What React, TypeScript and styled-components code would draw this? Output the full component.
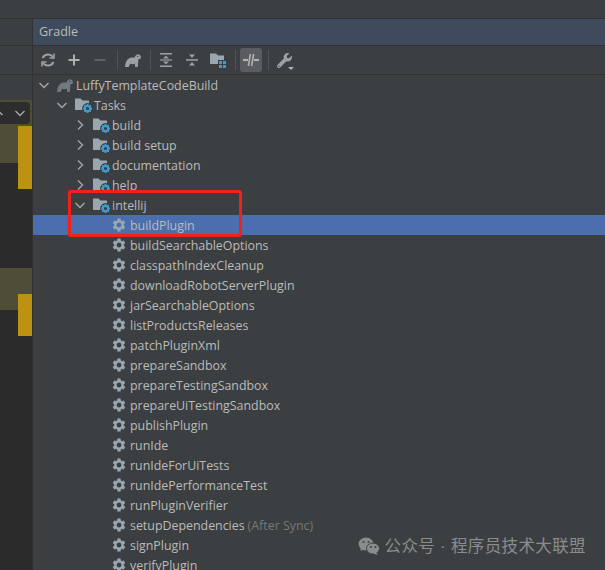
import React from 'react';
import styled, { createGlobalStyle } from 'styled-components';
import { MdSettings } from 'react-icons/md';
import { FaWrench } from 'react-icons/fa';

const GlobalStyle = createGlobalStyle`
  html, body { margin: 0; padding: 0; background: #3c3f41; }
  body { width: 605px; height: 570px; overflow: hidden; }
`;

const Page = styled.div`
  width: 605px;
  height: 570px;
  display: flex;
  flex-direction: column;
  overflow: hidden;
  position: relative;
  background: #3c3f41;
  font-family: "Open Sans", "Noto Sans", sans-serif;
`;

const TopStrip = styled.div`
  height: 18px;
  flex: none;
  background: #3c3f41;
  border-bottom: 1px solid #323232;
`;

const Body = styled.div`
  flex: 1;
  display: flex;
  min-height: 0;
`;

const LeftColumn = styled.div`
  width: 32px;
  flex: none;
  display: flex;
  flex-direction: column;
  background: #2b2b2b;
  border-right: 1px solid #323232;
`;

const LeftBar = styled.div<{ $h: number; $plain?: boolean }>`
  height: ${p => p.$h}px;
  flex: none;
  background: #3c3f41;
  border-bottom: ${p => (p.$plain ? 'none' : '1px solid #323232')};
  box-sizing: border-box;
`;

const Editor = styled.div`
  display: grid;
  grid-template-columns: 18px 14px;
  grid-template-rows: 26px 37px 26px 79px 26px 16px 26px;
  grid-template-areas:
    "olive1 olive1"
    "olive2 yellow1"
    "dark1 yellow1"
    "dark2 dark2"
    "olive3 olive3"
    "olive4 yellow2"
    "dark3 yellow2";
`;

const Cell = styled.div<{ $area: string; $color: string }>`
  grid-area: ${p => p.$area};
  background: ${p => p.$color};
  min-width: 0;
`;

const FindPopup = styled.div`
  margin: 2px 2px 2px 0;
  height: 22px;
  background: #2d2d2d;
  border-radius: 0 4px 4px 0;
  display: flex;
  align-items: center;
  justify-content: flex-end;
  gap: 12px;
  padding-right: 5px;
  overflow: hidden;

  svg {
    flex: none;
  }
`;

const GradlePanel = styled.div`
  flex: 1;
  min-width: 0;
  display: flex;
  flex-direction: column;
`;

const Header = styled.div`
  height: 26px;
  flex: none;
  background: #3d4b5c;
  color: #bbbbbb;
  font-size: 12.5px;
  line-height: 26px;
  padding-left: 6px;
  border-bottom: 1px solid #323232;
`;

const Toolbar = styled.div`
  height: 28px;
  flex: none;
  display: flex;
  align-items: center;
  padding-left: 4px;
  border-bottom: 1px solid #323232;
`;

const ToolButton = styled.div<{ $active?: boolean }>`
  width: 22px;
  height: 24px;
  margin-right: 4px;
  flex: none;
  display: flex;
  align-items: center;
  justify-content: center;
  border-radius: 3px;
  background: ${p => (p.$active ? '#5a5d5f' : 'transparent')};
`;

const ToolSep = styled.div`
  width: 1px;
  height: 20px;
  background: #515456;
  margin: 0 4px 0 2px;
  flex: none;
`;

const Tree = styled.div`
  flex: 1;
  overflow: hidden;
`;

const Row = styled.div<{ $depth: number; $selected?: boolean }>`
  height: 20px;
  display: flex;
  align-items: center;
  padding-left: ${p => 6 + p.$depth * 18}px;
  background: ${p => (p.$selected ? '#4b6eaf' : 'transparent')};
  color: #bbbbbb;
  font-size: 12.4px;
  white-space: nowrap;
`;

const ArrowSlot = styled.span`
  width: 18px;
  height: 20px;
  flex: none;
  display: flex;
  align-items: center;
`;

const IconSlot = styled.span`
  width: 18px;
  height: 16px;
  margin-right: 1px;
  flex: none;
  display: flex;
  align-items: center;
`;

const Hint = styled.span`
  color: #787878;
  margin-left: 3px;
`;

const RedBox = styled.div`
  position: absolute;
  left: 68px;
  top: 190px;
  width: 168px;
  height: 41px;
  border: 3px solid #f5201a;
  border-radius: 3px;
`;

const Watermark = styled.div`
  position: absolute;
  right: 19px;
  top: 536px;
  display: flex;
  align-items: center;
  gap: 5px;
  color: #8a8c8d;
  font-family: "Liberation Sans", "Noto Sans CJK SC", sans-serif;
  font-size: 16.5px;
  letter-spacing: 0.38px;
  line-height: 20px;
`;

const WrenchWrap = styled.span`
  position: relative;
  display: flex;
`;

const DropMark = styled.span`
  position: absolute;
  right: -2px;
  bottom: -2px;
  width: 0;
  height: 0;
  border-left: 3px solid transparent;
  border-right: 3px solid transparent;
  border-top: 3px solid #afb1b3;
`;

const Chevron = ({ open, up, color = '#a7a9ab' }: { open: boolean; up?: boolean; color?: string }) => (
  <svg width="10" height="10" viewBox="0 0 10 10" fill="none" stroke={color} strokeWidth="1.3">
    {up && <path d="M0.5 7 L5 2.5 L9.5 7" />}
    {!up && open && <path d="M0.5 3 L5 7.5 L9.5 3" />}
    {!up && !open && <path d="M3 0.5 L7.5 5 L3 9.5" />}
  </svg>
);

const Elephant = ({ color = '#6f7a82' }: { color?: string }) => (
  <svg width="16" height="13" viewBox="0 0 16 13" fill={color}>
    <path d="M0 13 C0.2 9 1.6 5.4 4.6 4 C6.6 3.2 8.4 3.4 9.6 3.6 C10.2 1.4 11.8 0 13.4 0.3 C15.2 0.7 16.2 2.2 15.8 4.2 C15.2 5.2 14 4.6 13.4 5.2 C13.2 7.6 13 10 12.8 13 L10.2 13 L9.8 9.8 C8.2 10.4 6.4 10.4 5 9.8 L3.8 13 Z" />
    <circle cx="12.8" cy="2.4" r="0.6" fill="#3c3f41" />
  </svg>
);

const FolderGear = () => (
  <svg width="18" height="16" viewBox="0 0 18 16">
    <path d="M0 1.5 H5.5 L7.5 3.5 H14 V13 H0 Z" fill="#9aa7b0" />
    <circle cx="12.5" cy="11.5" r="5.4" fill="#3c3f41" />
    <g fill="#3c9bd0">
      <circle cx="12.5" cy="11.5" r="2.6" fill="none" stroke="#3c9bd0" strokeWidth="2" />
      <rect x="11.5" y="7" width="2" height="2" />
      <rect x="11.5" y="14" width="2" height="2" />
      <rect x="8" y="10.5" width="2" height="2" />
      <rect x="15" y="10.5" width="2" height="2" />
      <rect x="9" y="8" width="1.8" height="1.8" />
      <rect x="14.2" y="8" width="1.8" height="1.8" />
      <rect x="9" y="13.2" width="1.8" height="1.8" />
      <rect x="14.2" y="13.2" width="1.8" height="1.8" />
    </g>
  </svg>
);

const Refresh = () => (
  <svg width="16" height="16" viewBox="0 0 16 16" fill="none" stroke="#9da0a2" strokeWidth="2">
    <path d="M13 5 A6 6 0 0 0 2.6 6" />
    <path d="M3 11 A6 6 0 0 0 13.4 10" />
    <path d="M14 1.5 V6 H9.5" strokeWidth="1.6" />
    <path d="M2 14.5 V10 H6.5" strokeWidth="1.6" />
  </svg>
);

const Plus = ({ color }: { color: string }) => (
  <svg width="12" height="12" viewBox="0 0 12 12" fill={color}>
    <rect x="0.5" y="5" width="11" height="2" />
    <rect x="5" y="0.5" width="2" height="11" />
  </svg>
);

const Minus = () => (
  <svg width="12" height="12" viewBox="0 0 12 12" fill="#5d6062">
    <rect x="0.5" y="5" width="11" height="2" />
  </svg>
);

const ExpandAll = () => (
  <svg width="14" height="16" viewBox="0 0 14 16" fill="#9da0a2">
    <rect x="1" y="1" width="12" height="1.5" />
    <rect x="1" y="13.5" width="12" height="1.5" />
    <rect x="1" y="7.4" width="12" height="1.2" />
    <path d="M7 3.5 L10 6.4 H4 Z" />
    <path d="M7 12.5 L10 9.6 H4 Z" />
  </svg>
);

const CollapseAll = () => (
  <svg width="14" height="16" viewBox="0 0 14 16" fill="#9da0a2">
    <rect x="1" y="7.2" width="12" height="1.5" />
    <path d="M7 6 L10 2.6 H4 Z" />
    <path d="M7 10 L10 13.4 H4 Z" />
  </svg>
);

const FolderGrid = () => (
  <svg width="16" height="16" viewBox="0 0 16 16">
    <path d="M0 1.5 H6 L8 3.5 H14 V12 H0 Z" fill="#9aa7b0" />
    <rect x="8" y="8" width="8.5" height="8.5" fill="#3c3f41" />
    <g fill="#3c9bd0">
      <rect x="9" y="9" width="3" height="3" />
      <rect x="13" y="9" width="3" height="3" />
      <rect x="9" y="13" width="3" height="3" />
      <rect x="13" y="13" width="3" height="3" />
    </g>
  </svg>
);

const OfflineToggle = () => (
  <svg width="16" height="14" viewBox="0 0 16 14" fill="none" stroke="#afb1b3" strokeWidth="1.6">
    <path d="M0 7 H5" strokeWidth="2.2" />
    <path d="M11 7 H16" strokeWidth="2.2" />
    <path d="M7.4 1 L5.4 13" />
    <path d="M10.6 1 L8.6 13" />
  </svg>
);

const Wrench = () => (
  <WrenchWrap>
    <FaWrench size={15} color="#9da0a2" />
    <DropMark />
  </WrenchWrap>
);

const WeChat = () => (
  <svg width="22" height="18" viewBox="0 0 22 18" fill="#8a8c8d">
    <ellipse cx="8" cy="7" rx="7.5" ry="6.5" />
    <path d="M3 10 L2.5 14 L7 12 Z" />
    <ellipse cx="15" cy="11.5" rx="6.5" ry="5.5" stroke="#3c3f41" strokeWidth="1" />
    <path d="M18 15 L19.5 18 L15 16.5 Z" />
    <circle cx="5.5" cy="5" r="1" fill="#3c3f41" />
    <circle cx="10.5" cy="5" r="1" fill="#3c3f41" />
    <circle cx="13" cy="10" r="1" fill="#3c3f41" />
    <circle cx="17.5" cy="10" r="1" fill="#3c3f41" />
  </svg>
);

type Kind = 'root' | 'group' | 'task';

interface Node {
  label: string;
  kind: Kind;
  depth: number;
  open?: boolean;
  selected?: boolean;
  hint?: string;
}

const task = (label: string, extra?: Partial<Node>): Node => ({ label, kind: 'task', depth: 3, ...extra });

const nodes: Node[] = [
  { label: 'LuffyTemplateCodeBuild', kind: 'root', depth: 0, open: true },
  { label: 'Tasks', kind: 'group', depth: 1, open: true },
  { label: 'build', kind: 'group', depth: 2, open: false },
  { label: 'build setup', kind: 'group', depth: 2, open: false },
  { label: 'documentation', kind: 'group', depth: 2, open: false },
  { label: 'help', kind: 'group', depth: 2, open: false },
  { label: 'intellij', kind: 'group', depth: 2, open: true },
  task('buildPlugin', { selected: true }),
  task('buildSearchableOptions'),
  task('classpathIndexCleanup'),
  task('downloadRobotServerPlugin'),
  task('jarSearchableOptions'),
  task('listProductsReleases'),
  task('patchPluginXml'),
  task('prepareSandbox'),
  task('prepareTestingSandbox'),
  task('prepareUiTestingSandbox'),
  task('publishPlugin'),
  task('runIde'),
  task('runIdeForUiTests'),
  task('runIdePerformanceTest'),
  task('runPluginVerifier'),
  task('setupDependencies', { hint: '(After Sync)' }),
  task('signPlugin'),
  task('verifyPlugin'),
];

const TreeRow = ({ node }: { node: Node }) => (
  <Row $depth={node.depth} $selected={node.selected}>
    {node.kind !== 'task' && (
      <ArrowSlot>
        <Chevron open={!!node.open} />
      </ArrowSlot>
    )}
    {node.kind === 'task' && <ArrowSlot />}
    <IconSlot>
      {node.kind === 'root' && <Elephant />}
      {node.kind === 'group' && <FolderGear />}
      {node.kind === 'task' && <MdSettings size={16} color="#9aa7b0" />}
    </IconSlot>
    {node.label}
    {node.hint && <Hint>{node.hint}</Hint>}
  </Row>
);

const App: React.FC = () => (
  <Page>
    <GlobalStyle />
    <TopStrip />
    <Body>
      <LeftColumn>
        <LeftBar $h={27} />
        <LeftBar $h={29} />
        <LeftBar $h={25} $plain />
        <Editor>
          <Cell $area="olive1" $color="#4f4d38">
            <FindPopup>
              <Chevron open up />
              <Chevron open />
            </FindPopup>
          </Cell>
          <Cell $area="olive2" $color="#4f4d38" />
          <Cell $area="yellow1" $color="#bd9213" />
          <Cell $area="dark1" $color="#2b2b2b" />
          <Cell $area="dark2" $color="#2b2b2b" />
          <Cell $area="olive3" $color="#4f4d38" />
          <Cell $area="olive4" $color="#4f4d38" />
          <Cell $area="yellow2" $color="#bd9213" />
          <Cell $area="dark3" $color="#2b2b2b" />
        </Editor>
      </LeftColumn>
      <GradlePanel>
        <Header>Gradle</Header>
        <Toolbar>
          <ToolButton><Refresh /></ToolButton>
          <ToolButton><Plus color="#afb1b3" /></ToolButton>
          <ToolButton><Minus /></ToolButton>
          <ToolSep />
          <ToolButton><Elephant color="#9da0a2" /></ToolButton>
          <ToolSep />
          <ToolButton><ExpandAll /></ToolButton>
          <ToolButton><CollapseAll /></ToolButton>
          <ToolButton><FolderGrid /></ToolButton>
          <ToolSep />
          <ToolButton $active><OfflineToggle /></ToolButton>
          <ToolSep />
          <ToolButton><Wrench /></ToolButton>
        </Toolbar>
        <Tree>
          {nodes.map(n => (
            <TreeRow key={n.label} node={n} />
          ))}
        </Tree>
      </GradlePanel>
    </Body>
    <RedBox />
    <Watermark>
      <WeChat />
      <span>公众号 · 程序员技术大联盟</span>
    </Watermark>
  </Page>
);

export default App;
